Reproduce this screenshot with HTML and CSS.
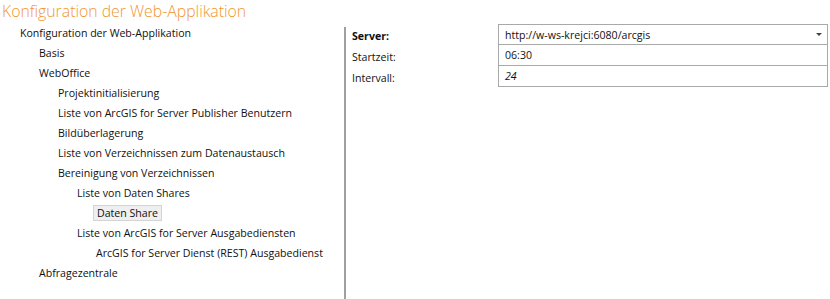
FILE: index.html
```html
<!DOCTYPE html>
<html lang="de">
<head>
  <meta charset="UTF-8" />
  <title>Konfiguration der Web-Applikation</title>
  <link rel="stylesheet" href="styles.css">
</head>
<body>
  <h1 class="title">Konfiguration der Web-Applikation</h1>

  <div class="main">
    <ul class="tree">
      <li class="lvl0">Konfiguration der Web-Applikation</li>
      <li class="lvl1">Basis</li>
      <li class="lvl1">WebOffice</li>
      <li class="lvl2">Projektinitialisierung</li>
      <li class="lvl2">Liste von ArcGIS for Server Publisher Benutzern</li>
      <li class="lvl2">Bildüberlagerung</li>
      <li class="lvl2">Liste von Verzeichnissen zum Datenaustausch</li>
      <li class="lvl2">Bereinigung von Verzeichnissen</li>
      <li class="lvl3">Liste von Daten Shares</li>
      <li class="lvl4"><span class="selected">Daten Share</span></li>
      <li class="lvl3">Liste von ArcGIS for Server Ausgabediensten</li>
      <li class="lvl4">ArcGIS for Server Dienst (REST) Ausgabedienst</li>
      <li class="lvl1">Abfragezentrale</li>
    </ul>

    <div class="props">
      <div class="row">
        <label class="bold">Server:</label>
        <div class="field select">
          <span>http://w-ws-krejci:6080/arcgis</span>
          <span class="arrow"></span>
        </div>
      </div>
      <div class="row">
        <label>Startzeit:</label>
        <div class="field">06:30</div>
      </div>
      <div class="row">
        <label>Intervall:</label>
        <div class="field italic">24</div>
      </div>
    </div>
  </div>
</body>
</html>
```

FILE: styles.css
```css
body {
  font-family: "Open Sans", "Noto Sans", sans-serif;
  font-size: 10.6px;
  color: #111;
  background-color: white;
  margin: 0;
  padding: 0;
  overflow: hidden;
}

.title {
  margin: 0;
  padding: 0 0 0 2px;
  height: 23px;
  line-height: 23px;
  font-size: 15.8px;
  font-weight: 300;
  color: #f0962f;
}

.main {
  display: flex;
  align-items: flex-start;
}

.tree {
  list-style: none;
  margin: 0;
  padding: 0;
  width: 344px;
}

.tree li {
  height: 20px;
  line-height: 20px;
  white-space: nowrap;
}

.lvl0 { padding-left: 20px; }
.lvl1 { padding-left: 39px; }
.lvl2 { padding-left: 58px; }
.lvl3 { padding-left: 77px; }
.lvl4 { padding-left: 96px; }

.selected {
  display: inline-block;
  margin-left: -3px;
  padding: 0 3px;
  height: 16px;
  line-height: 15px;
  background-color: #efefef;
  border: 1px solid #d4d4d4;
  box-sizing: border-box;
}

.props {
  border-left: 2px solid #a0a0a0;
  margin-top: 4px;
  height: 272px;
  padding-left: 6px;
  display: flex;
  flex-direction: column;
  flex: 1;
}

.row {
  display: flex;
  height: 21px;
  align-items: stretch;
}

.row:first-child {
  margin-top: -3px;
}

.row label {
  width: 146px;
  line-height: 21px;
  padding-top: 2px;
}

.bold {
  font-weight: 700;
}

.field {
  width: 330px;
  box-sizing: border-box;
  border: 1px solid #a9a9a9;
  border-top: none;
  padding: 0 6px;
  line-height: 20px;
  display: flex;
  justify-content: space-between;
  align-items: center;
}

.row:first-child .field {
  border-top: 1px solid #a9a9a9;
}

.italic {
  font-style: italic;
}

.arrow {
  width: 0;
  height: 0;
  border-left: 3px solid transparent;
  border-right: 3px solid transparent;
  border-top: 3px solid #444;
  margin-right: -1px;
}
```
